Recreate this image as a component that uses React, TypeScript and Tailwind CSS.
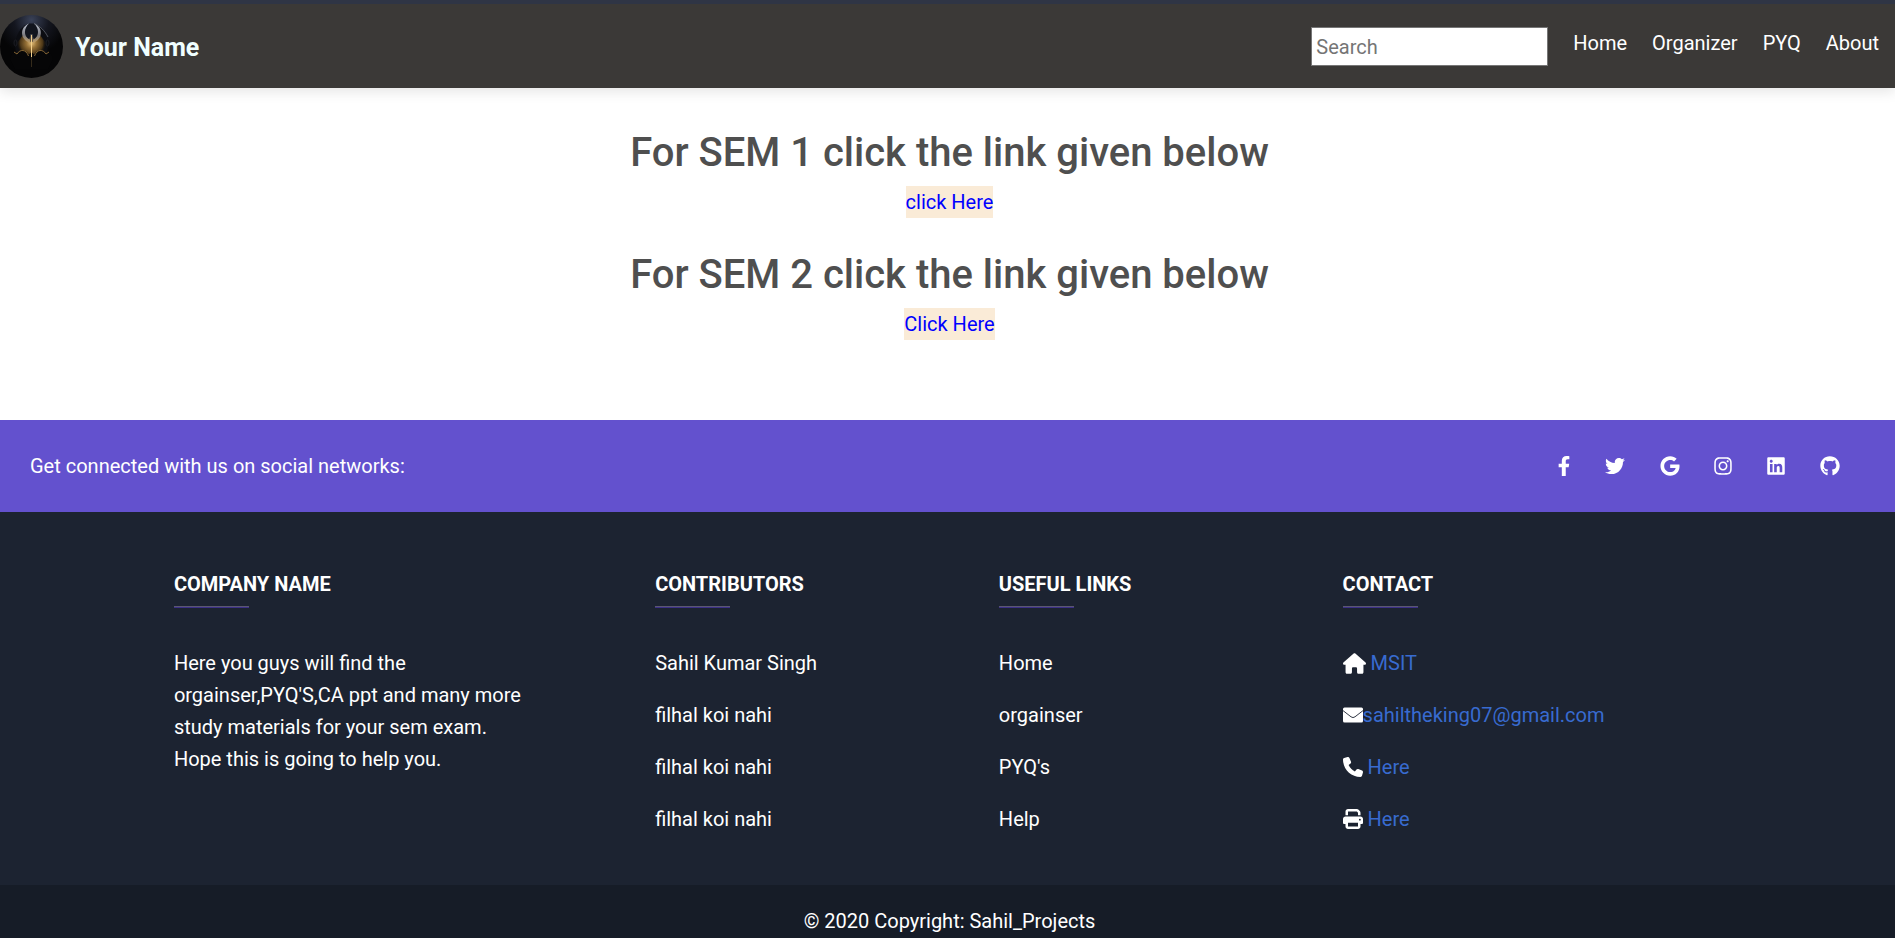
import type { ReactNode } from "react";
import { FaFacebookF, FaTwitter, FaGoogle, FaInstagram, FaLinkedin, FaGithub } from "react-icons/fa";
import { FaHouse, FaPhone, FaPrint } from "react-icons/fa6";

function Logo() {
  return (
    <svg viewBox="0 0 63 63" className="size-[63px]" role="img" aria-label="Logo">
      <defs>
        <radialGradient id="sky" cx="0.5" cy="0.08" r="0.55">
          <stop offset="0" stopColor="#3a4258" />
          <stop offset="0.5" stopColor="#14161f" />
          <stop offset="1" stopColor="#050506" />
        </radialGradient>
        <radialGradient id="glow" cx="31.5" cy="28" r="15" gradientUnits="userSpaceOnUse">
          <stop offset="0" stopColor="#e0bc78" />
          <stop offset="0.35" stopColor="#957036" />
          <stop offset="0.75" stopColor="#4b3617" />
          <stop offset="1" stopColor="#0b0906" stopOpacity="0" />
        </radialGradient>
        <linearGradient id="horn" x1="0" y1="0" x2="0" y2="1">
          <stop offset="0" stopColor="#b9c0cf" />
          <stop offset="0.55" stopColor="#7d7c80" />
          <stop offset="1" stopColor="#d7a858" />
        </linearGradient>
      </defs>
      <circle cx="31.5" cy="31.5" r="31.5" fill="url(#sky)" />
      <path d="M28 9C20 12 16 20 15 30L16 40H47L48 30C47 20 43 12 35 9Z" fill="#0c0d12" />
      <path d="M23 20L17 28L16 38C19 35 25 34 31.5 42C38 34 44 35 47 38L46 28L40 20Z" fill="url(#glow)" />
      <path d="M29 8.5C22 12 22 22 29 26L31 27V20H32V27L34.500 26C41 22 40 12 34 8.5Z" fill="#12151e" />
      <path d="M29 8.5C20 12 20 23 28 27L30.5 30V20L31.5 21.5L32.5 20V30L35 27C43 23 43 12 34 8.5C39 13 40 21 33.5 24.5L32.500 19.500H30.500L29.500 24.5C23 21 24 13 29 8.5Z" fill="url(#horn)" />
      <path d="M34 8.5C40 11 45 16 48 22" fill="none" stroke="#6c7078" strokeWidth="0.7" />
      <path d="M10 44C11 39 14 36 17 39C20 34 26 34 28.5 40L31.5 37L34.5 40C37 34 43 34 46 39C49 36 52 39 53 44L48 54H15Z" fill="#060607" />
      <path d="M14 37L17 39C20 34 26 34 28.5 41M34.5 41C37 34 43 34 46 39L49 37" fill="none" stroke="#94713a" strokeWidth="0.9" />
      <path d="M31.5 20V42" stroke="#f2cf8a" strokeWidth="1" />
      <path d="M31.5 42V52" stroke="#4a3c24" strokeWidth="0.7" />
      <ellipse cx="15.5" cy="28" rx="1.5" ry="3" fill="none" stroke="#22242b" strokeWidth="0.7" />
      <ellipse cx="47.5" cy="28" rx="1.5" ry="3" fill="none" stroke="#22242b" strokeWidth="0.7" />
    </svg>
  );
}

function Envelope() {
  return (
    <svg viewBox="0 0 20 20" className="size-5" aria-hidden="true">
      <path d="M1.500 2.5H18.5Q20 2.5 20 4V16Q20 17.5 18.500 17.5H1.5Q0 17.5 0 16V4Q0 2.5 1.5 2.5Z" fill="currentColor" />
      <path d="M0 5.6L8 11.8Q10 13.400 12 11.8L20 5.6" fill="none" stroke="#1c2331" strokeWidth="0.9" />
    </svg>
  );
}

const navItems = ["Home", "Organizer", "PYQ", "About"];

const socials = [
  { name: "Facebook", icon: <FaFacebookF />, box: "w-3" },
  { name: "Twitter", icon: <FaTwitter />, box: "w-5" },
  { name: "Google", icon: <FaGoogle />, box: "w-[19px]" },
  { name: "Instagram", icon: <FaInstagram />, box: "w-[18px]" },
  { name: "LinkedIn", icon: <FaLinkedin />, box: "w-[18px]" },
  { name: "GitHub", icon: <FaGithub />, box: "w-5" },
];

const contacts = [
  { label: "MSIT", icon: <FaHouse className="h-[21px] w-[23px]" />, gap: "gap-[5px]" },
  { label: "sahiltheking07@gmail.com", icon: <Envelope />, gap: "gap-0" },
  { label: "Here", icon: <FaPhone />, gap: "gap-[5px]" },
  { label: "Here", icon: <FaPrint />, gap: "gap-[5px]" },
];

function Semester({ title, link }: { title: string; link: string }) {
  return (
    <section className="flex flex-col items-center">
      <h1 className="mb-2 text-[40px] leading-[50px] font-medium text-[#4f4f4f]">{title}</h1>
      <a href="#" className="bg-[#faebd7] text-[#0000ff]">{link}</a>
    </section>
  );
}

function Column({ title, wide, children }: { title: string; wide?: boolean; children: ReactNode }) {
  return (
    <div className={wide ? "w-1/4 px-[15px]" : "w-1/6 px-[15px]"}>
      <h2 className="mb-2.5 leading-6 font-bold uppercase">{title}</h2>
      <hr className="mb-[39px] h-[2px] w-[75px] border-0 border-t border-[#5b5870] bg-[#3c3087]" />
      {children}
    </div>
  );
}

function LinkList({ items }: { items: string[] }) {
  return (
    <ul className="flex flex-col gap-5">
      {items.map((item, i) => (
        <li key={i}><a href="#">{item}</a></li>
      ))}
    </ul>
  );
}

export default function App() {
  return (
    <div className="min-h-screen overflow-x-hidden bg-white font-[Roboto,sans-serif] text-[20px] leading-8 text-white">
      <header className="relative flex items-center justify-between border-t-4 border-[#2f3545] bg-[#3b3937] pt-[11px] pr-4 pb-2.5 shadow-[0_4px_12px_rgba(0,0,0,0.1)]">
        <a href="#" className="flex items-center gap-3 text-[25px] font-bold text-[azure]">
          <Logo />
          <span className="pt-0.5">Your Name</span>
        </a>
        <div className="flex items-center">
          <input
            type="search"
            aria-label="Search"
            placeholder="Search"
            className="mr-[25px] h-[39px] w-[237px] border border-[#767676] bg-white px-1 text-[20px] text-black placeholder:text-[#757575]"
          />
          <nav className="mb-2">
            <ul className="flex gap-[25px]">
              {navItems.map((item) => (
                <li key={item}><a href="#">{item}</a></li>
              ))}
            </ul>
          </nav>
        </div>
      </header>

      <main className="flex flex-col gap-8 pt-10 pb-20 pl-1">
        <Semester title="For SEM 1 click the link given below" link="click Here" />
        <Semester title="For SEM 2 click the link given below" link="Click Here" />
      </main>

      <footer className="bg-[#1c2331]">
        <section className="flex items-center justify-between bg-[#6351ce] py-[30px] pr-[55px] pl-[30px]">
          <span>Get connected with us on social networks:</span>
          <div className="flex gap-[35px]">
            {socials.map((s) => (
              <a key={s.name} href="#" aria-label={s.name} className={s.box + " flex justify-center *:shrink-0"}>{s.icon}</a>
            ))}
          </div>
        </section>

        <section className="pt-[60px] pb-[50px] pl-1">
          <div className="mx-auto flex max-w-[1650px] justify-around">
            <Column title="Company name" wide>
              <p>
                Here you guys will find the orgainser,PYQ'S,CA ppt and many more study materials for your sem exam.
                <br />
                Hope this is going to help you.
              </p>
            </Column>
            <Column title="Contributors">
              <LinkList items={["Sahil Kumar Singh", "filhal koi nahi", "filhal koi nahi", "filhal koi nahi"]} />
            </Column>
            <Column title="Useful links">
              <LinkList items={["Home", "orgainser", "PYQ's", "Help"]} />
            </Column>
            <Column title="Contact" wide>
              <ul className="flex flex-col gap-5">
                {contacts.map((c, i) => (
                  <li key={i} className={c.gap + " flex items-center"}>
                    {c.icon}
                    <a href="#" className="text-[#386bd0]">{c.label}</a>
                  </li>
                ))}
              </ul>
            </Column>
          </div>
        </section>

        <div className="bg-[#161c27] py-5 pl-1 text-center">
          © 2020 Copyright: <a href="#">Sahil_Projects</a>
        </div>
      </footer>
    </div>
  );
}
